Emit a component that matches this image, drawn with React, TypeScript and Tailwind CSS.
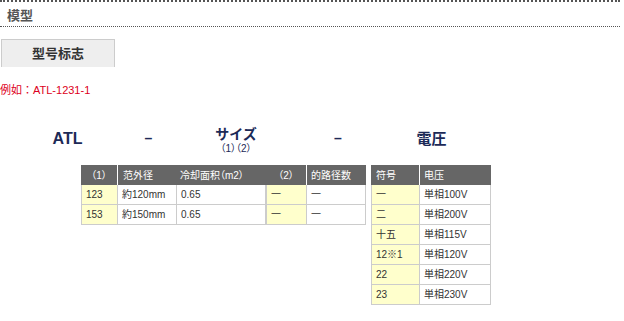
import React from "react";

const FONT = '"Liberation Sans", Arial, "Noto Sans CJK SC", sans-serif';
const JP = '"Liberation Sans", Arial, "Noto Sans CJK JP", sans-serif';

type Cell = { text: string; w: string; yellow?: boolean };

function Row({ cells }: { cells: Cell[] }) {
  return (
    <div className="flex h-[20px] border-b border-[#cccccc]">
      {cells.map((c, i) => (
        <div
          key={i}
          className={`${c.w} flex items-center pl-[4px] border-r border-[#cccccc] text-[10px] text-[#333333] ${
            c.yellow ? "bg-[#ffffcc]" : "bg-white"
          }`}
        >
          {c.text}
        </div>
      ))}
    </div>
  );
}

export default function App() {
  return (
    <div className="w-[624px] h-[321px] bg-white overflow-hidden" style={{ fontFamily: FONT }}>
      <div className="w-[620px]">
        {/* section title */}
        <div className="border-t-2 border-[#555555] h-[27px] border-b border-dotted border-b-[#555555] flex items-start pt-[6px] pl-[7px]">
          <span className="text-[13px] font-bold text-[#555555] leading-[16px]">模型</span>
        </div>

        {/* tab */}
        <div className="mt-[12px] ml-[1px] w-[114px] h-[28px] bg-[#eeeeee] border border-b-0 border-[#cccccc] flex items-center justify-center">
          <span className="text-[13px] font-bold text-[#333333]">型号标志</span>
        </div>

        {/* example */}
        <div className="mt-[17px] text-[11px] leading-[13px] text-[#dd0022]" style={{ fontFamily: JP }}>
          例如：ATL-1231-1
        </div>

        {/* heading row */}
        <div className="mt-[29px] flex items-start text-[#1c2a57] font-bold" style={{ fontFamily: JP }}>
          <div className="w-[135px] text-center text-[16px] leading-[16px] pt-[5px]">ATL</div>
          <div className="w-[27px] text-center text-[14px] leading-[16px] pt-[4px]">–</div>
          <div className="w-[148px] flex flex-col items-center">
            <span className="text-[14px] leading-[16px]">サイズ</span>
            <span className="text-[10px] leading-[10px] font-normal mt-[2px] [font-feature-settings:'palt']">
              （1）（2）
            </span>
          </div>
          <div className="w-[56px] text-center text-[14px] leading-[16px] pt-[4px]">–</div>
          <div className="w-[131px] text-center text-[15px] leading-[16px] pt-[5px]">電圧</div>
        </div>

        {/* tables */}
        <div
          className="mt-[11px] ml-[81px] flex items-start [font-feature-settings:'palt']"
          style={{ fontFamily: JP }}
        >
          {/* size (1) */}
          <div className="w-[185px]">
            <div className="flex h-[20px] bg-[#666666] text-white text-[10px]">
              <div className="w-[36px] flex items-center justify-center">（1）</div>
              <div className="w-[1px] bg-white" />
              <div className="w-[59px] flex items-center pl-[5px]">范外径</div>
              <div className="w-[89px] flex items-center pl-[3px]">冷却面积（m2）</div>
            </div>
            <div className="border-l border-[#cccccc]">
              <Row
                cells={[
                  { text: "123", w: "w-[36px]", yellow: true },
                  { text: "約120mm", w: "w-[59px]" },
                  { text: "0.65", w: "w-[89px]" },
                ]}
              />
              <Row
                cells={[
                  { text: "153", w: "w-[36px]", yellow: true },
                  { text: "約150mm", w: "w-[59px]" },
                  { text: "0.65", w: "w-[89px]" },
                ]}
              />
            </div>
          </div>

          {/* size (2) */}
          <div className="w-[100px]">
            <div className="flex h-[20px] bg-[#666666] text-white text-[10px]">
              <div className="w-[40px] flex items-center justify-center">（2）</div>
              <div className="w-[1px] bg-white" />
              <div className="w-[59px] flex items-center pl-[4px]">的路径数</div>
            </div>
            <div className="border-l border-[#cccccc]">
              <Row
                cells={[
                  { text: "一", w: "w-[40px]", yellow: true },
                  { text: "一", w: "w-[59px]" },
                ]}
              />
              <Row
                cells={[
                  { text: "一", w: "w-[40px]", yellow: true },
                  { text: "一", w: "w-[59px]" },
                ]}
              />
            </div>
          </div>

          {/* voltage */}
          <div className="w-[120px] ml-[5px]">
            <div className="flex h-[20px] bg-[#666666] text-white text-[10px]">
              <div className="w-[48px] flex items-center pl-[5px]">符号</div>
              <div className="w-[1px] bg-white" />
              <div className="w-[71px] flex items-center pl-[4px]">电压</div>
            </div>
            <div className="border-l border-[#cccccc]">
              {[
                ["一", "単相100V"],
                ["二", "単相200V"],
                ["十五", "単相115V"],
                ["12※1", "単相120V"],
                ["22", "単相220V"],
                ["23", "単相230V"],
              ].map(([a, b]) => (
                <Row
                  key={b}
                  cells={[
                    { text: a, w: "w-[48px]", yellow: true },
                    { text: b, w: "w-[71px]" },
                  ]}
                />
              ))}
            </div>
          </div>
        </div>
      </div>
    </div>
  );
}
